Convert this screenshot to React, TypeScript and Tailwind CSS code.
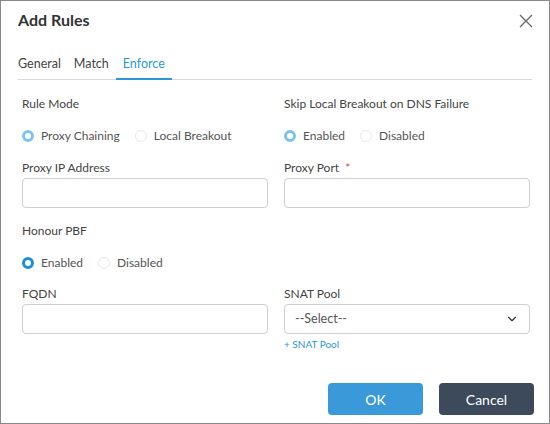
import { ChevronDown } from "lucide-react";

type RadioProps = { label: string; checked?: boolean; light?: boolean };

function Radio({ label, checked, light }: RadioProps) {
  return (
    <div className="flex items-center gap-[7px]">
      {checked ? (
        <span
          className={`w-[12px] h-[12px] rounded-full border-[3.5px] bg-white ${
            light ? "border-[#7cc3ee]" : "border-[#1a8fdd]"
          }`}
        />
      ) : (
        <span className="w-[12px] h-[12px] rounded-full border border-[#e8e8e8] bg-white" />
      )}
      <span className="text-[12px] leading-[16px] text-[#555]">{label}</span>
    </div>
  );
}

function Label({ children }: { children: React.ReactNode }) {
  return <div className="text-[12px] leading-[16px] text-[#444]">{children}</div>;
}

function TextInput() {
  return <div className="mt-[2px] h-[30px] rounded-[4px] border border-[#cfcfcf] bg-white" />;
}

export default function App() {
  return (
    <div
      className="w-[550px] h-[424px] border border-[#8a8a8a] bg-white flex flex-col"
      style={{ fontFamily: "Lato, 'Open Sans', sans-serif" }}
    >
      <div className="flex items-start justify-between pl-[17px] pr-[16px] pt-[9px]">
        <h1 className="text-[16px] leading-[20px] font-bold text-[#333]">Add Rules</h1>
        <svg width="14" height="14" viewBox="0 0 14 14" className="mt-[4px]">
          <path d="M1 1L13 13M13 1L1 13" stroke="#666" strokeWidth="1.3" />
        </svg>
      </div>

      <div className="mx-[17px] mt-[26px] flex border-b border-[#d9d9d9] text-[12.5px] leading-[16px]">
        <div className="pb-[7px] pr-[13px] text-[#444]">General</div>
        <div className="pb-[7px] pr-[7px] text-[#444]">Match</div>
        <div className="pb-[5px] px-[7px] text-[#2a96dc] border-b-2 border-[#2a96dc] -mb-px">Enforce</div>
      </div>

      <div className="grid grid-cols-2 gap-x-[16px] pl-[21px] pr-[19px] mt-[16px]">
        <div>
          <Label>Rule Mode</Label>
          <div className="mt-[16px] flex gap-[15px]">
            <Radio label="Proxy Chaining" checked light />
            <Radio label="Local Breakout" />
          </div>
        </div>
        <div>
          <Label>Skip Local Breakout on DNS Failure</Label>
          <div className="mt-[16px] flex gap-[15px]">
            <Radio label="Enabled" checked light />
            <Radio label="Disabled" />
          </div>
        </div>

        <div className="mt-[16px]">
          <Label>Proxy IP Address</Label>
          <TextInput />
        </div>
        <div className="mt-[16px]">
          <Label>
            Proxy Port <span className="ml-[3px] text-[#e0474c]">*</span>
          </Label>
          <TextInput />
        </div>

        <div className="mt-[15px]">
          <Label>Honour PBF</Label>
          <div className="mt-[16px] flex gap-[15px]">
            <Radio label="Enabled" checked />
            <Radio label="Disabled" />
          </div>
        </div>
        <div />

        <div className="mt-[15px]">
          <Label>FQDN</Label>
          <TextInput />
        </div>
        <div className="mt-[15px]">
          <Label>SNAT Pool</Label>
          <div className="mt-[2px] h-[30px] rounded-[4px] border border-[#cfcfcf] bg-white flex items-center justify-between pl-[10px] pr-[10px]">
            <span className="text-[12.5px] text-[#555]">--Select--</span>
            <ChevronDown size={14} strokeWidth={2} className="text-[#333]" />
          </div>
          <div className="mt-[4px] text-[10px] leading-[12px] text-[#2a96dc]">+ SNAT Pool</div>
        </div>
      </div>

      <div className="mt-auto mb-[8px] flex justify-end gap-[16px] pr-[15px]">
        <button className="w-[95px] h-[32px] rounded-[4px] bg-[#3a9ad9] text-white text-[14px]">OK</button>
        <button className="w-[95px] h-[32px] rounded-[4px] bg-[#3d4a5c] text-white text-[14px]">Cancel</button>
      </div>
    </div>
  );
}
